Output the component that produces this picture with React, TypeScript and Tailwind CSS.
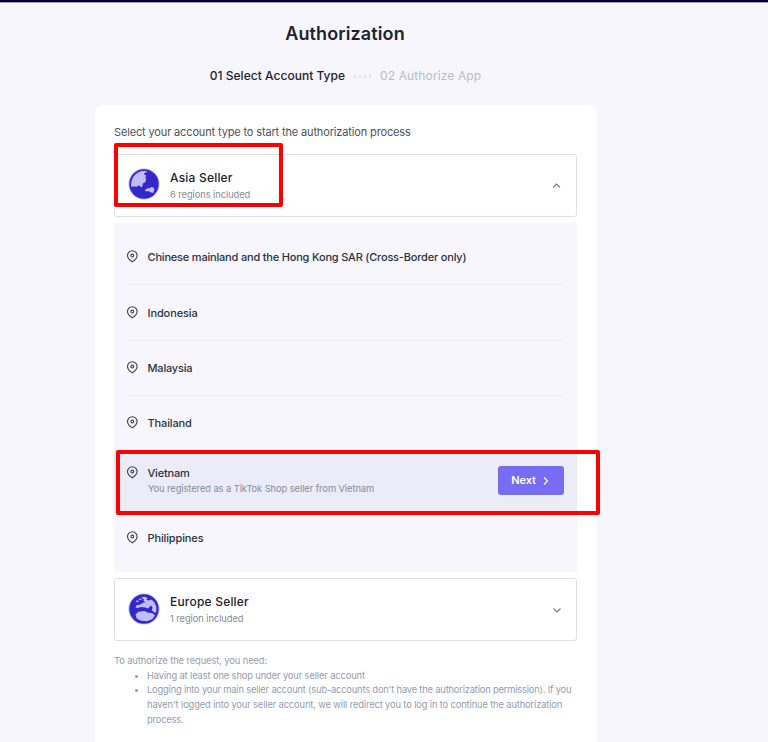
import React from "react";

function Pin() {
  return (
    <svg className="-ml-0.5 size-[14px] shrink-0" viewBox="0 0 14 14" fill="none" stroke="#3c4150" strokeWidth="1.1">
      <path d="M7.300 11.900C4.500 10 2.500 8 2.500 5.500a4.800 4.800 0 0 1 9.600 0c0 2.500-2 4.500-4.800 6.400Z" />
      <circle cx="7.300" cy="5.500" r="1.400" />
    </svg>
  );
}

function Chevron({ className, d }: { className: string; d: string }) {
  return (
    <svg className={className} viewBox="0 0 10 10" fill="none" stroke="currentColor" strokeWidth="1.1">
      <path d={d} />
    </svg>
  );
}

function AsiaGlobe() {
  return (
    <svg className="-mt-[3px] size-8 shrink-0" viewBox="0 0 32 32">
      <circle cx="16" cy="16" r="15.700" fill="#c9c7fa" />
      <circle cx="16" cy="16" r="14.700" fill="#3528cb" />
      <path fill="#c0bcff" d="M3 18.500C2.800 10.500 7 4.500 14 3L18.500 2.900L18.800 4.200L16.500 4.800L16 6.200L18.200 7.500L17.400 9.500L18.200 11.500L17 14.500L14.800 15.500L14.600 17.500L13.500 19.500L12.300 18.500L11.500 17.500L9.500 18L8.500 19L6.500 18.200L5 18.800Z" />
      <path fill="#c0bcff" d="M17 22L19.500 20.200L22 20.300L23 18.900L25.500 19.500L26.500 21.500L25.300 24.700L23 24.500L21 23.300L17.500 23.200Z" />
    </svg>
  );
}

function EuropeGlobe() {
  return (
    <svg className="-mt-[2px] size-8 shrink-0" viewBox="0 0 32 32">
      <circle cx="16" cy="16" r="15.700" fill="#c9c7fa" />
      <circle cx="16" cy="16" r="14.700" fill="#3528cb" />
      <path fill="#c0bcff" d="M13 4.500L17 3.800L20 5.500L18 6.500L20.500 7.500L23.500 6.500L26.500 9.500L28.300 14L28.300 18L27 20.300L25.500 18.500L23.800 17.500L24.500 14.500L23.300 12.500L21.500 14L20 15.500L17.500 14.500L13 14L9.500 15L7.500 14.500L8.500 12.200L12.500 11.500L15 9.800L17.500 9.200L15.500 8L16 6.500Z" />
      <path fill="#c0bcff" d="M7.500 8.800L9 7.200L10.800 7.800L9.800 9.300ZM10.500 6.200L12.500 5.400L14 6.500L12 7.200Z" />
      <path fill="#c0bcff" d="M7.500 21.500L10.500 18.700L16.500 18L19.500 19.500L24.500 20.300L27 22.500L24.500 26L19 28.300L13 27.800L8.700 25.500Z" />
    </svg>
  );
}

function Region({ name, tracking, last = false }: { name: string; tracking: string; last?: boolean }) {
  return (
    <div className={`mx-[13px] flex items-center gap-2 ${last ? "h-[54px]" : "h-[55.400px] border-b border-[#ecebf3]"}`}>
      <Pin />
      <span className={`ml-[0.500px] whitespace-nowrap pt-px text-[11px] font-medium text-[#2d3240] ${tracking}`}>{name}</span>
    </div>
  );
}

export default function App() {
  return (
    <div className="relative h-[742px] w-full overflow-hidden bg-[#f6f6fc] font-['Inter','Liberation_Sans',sans-serif] text-[#1e2230]">
      <div className="h-[3px] border-b border-[#a4a3bd] bg-[#02003b]" />
      <header className="ml-[94px] flex w-[502px] flex-col items-center">
        <h1 className="mt-[19px] whitespace-nowrap text-[18px] leading-6 font-semibold tracking-[0.120px]">Authorization</h1>
        <div className="mt-5 ml-px flex h-[20px] items-center whitespace-nowrap text-[12px]">
          <span className="font-medium tracking-[0.030px]">01 Select Account Type</span>
          <span className="mr-[9px] ml-[9px] flex gap-[3px]">
            <i className="h-[3px] w-0.5 bg-[#dfe1ed]" />
            <i className="h-[3px] w-0.5 bg-[#dfe1ed]" />
            <i className="h-[3px] w-0.5 bg-[#dfe1ed]" />
            <i className="h-[3px] w-0.5 bg-[#dfe1ed]" />
          </span>
          <span className="tracking-[0.120px] text-[#b7bdcc]">02 Authorize App</span>
        </div>
      </header>

      <main className="mt-[19px] ml-[95px] h-[660px] w-[502px] rounded-lg bg-white pt-[19px] pr-5 pl-[19px]">
        <p className="h-[30px] whitespace-nowrap text-[11px] leading-4 tracking-[-0.145px] text-[#4b5262]">Select your account type to start the authorization process</p>

        <section className="flex h-[63px] items-center rounded-[3px] border border-[#dfdfe9] pr-[15px] pl-[13px]">
          <AsiaGlobe />
          <div className="ml-[10px] flex-1 pt-0.5">
            <h2 className="text-[12px] leading-[16px] font-medium tracking-[0.200px]">Asia Seller</h2>
            <p className="text-[9.300px] leading-[17px] tracking-[-0.060px] text-[#858b99]">6 regions included</p>
          </div>
          <Chevron className="size-[10px] text-[#73798b]" d="M2 6.500L5.500 3L9 6.500" />
        </section>

        <section className="mt-1.5 h-[349px] rounded-[3px] bg-[#f6f6fc] pt-[7px]">
          <Region name="Chinese mainland and the Hong Kong SAR (Cross-Border only)" tracking="tracking-[-0.190px]" />
          <Region name="Indonesia" tracking="tracking-[-0.100px]" />
          <Region name="Malaysia" tracking="tracking-[-0.200px]" />
          <div className="mx-[13px] flex h-[54px] items-center gap-2">
            <Pin />
            <span className="ml-[0.500px] pt-px text-[11px] font-medium tracking-[-0.120px] text-[#2d3240]">Thailand</span>
          </div>
          <div className="flex h-[61px] items-start bg-[#ecebf8] px-[13px] pt-[15px]">
            <div className="pt-px">
              <Pin />
            </div>
            <div className="ml-[8.500px] flex-1">
              <p className="text-[11px] leading-4 font-medium tracking-[-0.200px] text-[#2d3240]">Vietnam</p>
              <p className="ml-[0.500px] whitespace-nowrap text-[9.300px] leading-[15px] tracking-[-0.060px] text-[#858b99]">You registered as a TikTok Shop seller from Vietnam</p>
            </div>
            <button className="mt-px flex h-[29px] w-[66px] items-center justify-center gap-[5px] rounded-[3px] bg-[#776cf2] text-[11px] font-semibold tracking-[-0.150px] text-white">
              Next
              <Chevron className="size-[10px]" d="M3 1.500L6.500 5L3 8.500" />
            </button>
          </div>
          <Region name="Philippines" tracking="tracking-[-0.130px]" last />
        </section>

        <section className="mt-1.5 flex h-[63px] items-center rounded-[3px] border border-[#dfdfe9] pr-[14px] pl-[13px]">
          <EuropeGlobe />
          <div className="ml-[10px] flex-1 pt-px">
            <h2 className="text-[12px] leading-[16px] font-medium tracking-[0.200px]">Europe Seller</h2>
            <p className="text-[9.300px] leading-[17px] tracking-[-0.060px] text-[#858b99]">1 region included</p>
          </div>
          <Chevron className="size-[10px] text-[#73798b]" d="M1.500 3.500L5 7L8.500 3.500" />
        </section>

        <div className="mt-[13px] whitespace-nowrap text-[9.300px] leading-[14.700px] tracking-[-0.150px] text-[#939db0]">
          <p className="tracking-[-0.080px]">To authorize the request, you need:</p>
          <ul className="list-disc pl-[33px] marker:text-[8px]">
            <li className="tracking-[-0.110px]">Having at least one shop under your seller account</li>
            <li>
              <span className="tracking-[-0.170px]">Logging into your main seller account (sub-accounts don't have the authorization permission). If you</span>
              <br />
              <span className="tracking-[-0.120px]">haven't logged into your seller account, we will redirect you to log in to continue the authorization</span>
              <br />
              process.
            </li>
          </ul>
        </div>
      </main>

      <div className="absolute top-[142.500px] left-[114px] h-[64px] w-[169px] rounded-[2px] border-4 border-[#fe0000]" />
      <div className="absolute top-[450px] left-[116px] h-[65px] w-[484px] rounded-[2px] border-4 border-[#fe0000]" />
    </div>
  );
}
